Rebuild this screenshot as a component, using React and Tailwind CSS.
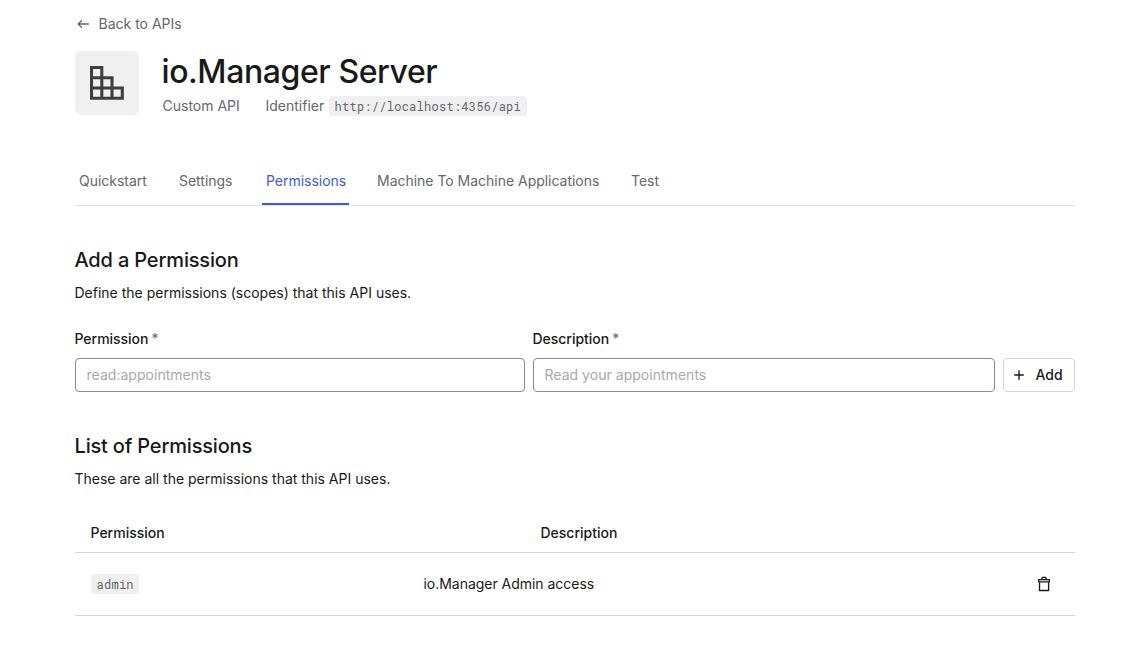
import React from "react";

const tabs = [
  { label: "Quickstart", width: "w-[76px]" },
  { label: "Settings", width: "w-[63px]" },
  { label: "Permissions", width: "w-[87px]", active: true },
  { label: "Machine To Machine Applications", width: "w-[230px]" },
  { label: "Test", width: "w-[36px]" },
];

function Code({ children }) {
  return (
    <code className="inline-flex h-5 items-center rounded bg-[#f0f0f0] pl-[6px] pr-[5.5px] font-['Roboto_Mono','Liberation_Mono',monospace] text-[12px] leading-4 tracking-[0.26px] text-[#65676e]">
      {children}
    </code>
  );
}

function BlocksIcon() {
  return (
    <svg width="34" height="34" viewBox="0 0 34 34" fill="none" stroke="#3f3f3f" strokeWidth="3.1">
      <path d="M1.5 1.5H11.8V32.3H1.5ZM1.5 11.8H22V32.3M1.5 22H32.3V32.3H1.5" />
    </svg>
  );
}

function Field({ label, placeholder, className }) {
  return (
    <label className={`flex flex-col ${className}`}>
      <span className="h-5 text-[14px] font-medium leading-5 tracking-[-0.02px]">
        {label}
        <span className="ml-[3px] font-normal text-[#65676e]">*</span>
      </span>
      <input
        placeholder={placeholder}
        className="mt-[9px] h-[34px] w-full rounded border border-[#8c8c8d] px-[10.5px] pb-[2px] text-[14px] tracking-[0.03px] outline-none placeholder:text-[#aaaaaa]"
      />
    </label>
  );
}

export default function App() {
  return (
    <main className="h-[661px] w-full overflow-hidden bg-white pl-[75px] font-['Inter',sans-serif] text-[14px] leading-5 text-[#191919] [text-indent:-0.5px]">
      <div className="flex w-[1000px] flex-col">
        <a className="mt-[14px] flex h-5 items-center text-[#65676e]">
          <svg className="ml-[2px] mr-[9px]" width="13" height="12" viewBox="0 0 13 12" fill="none" stroke="currentColor" strokeWidth="1.3" strokeLinecap="round" strokeLinejoin="round">
            <path d="M11.3 6H1.2M4.4 2.8L1.2 6l3.2 3.2" />
          </svg>
          <span>Back to APIs</span>
        </a>

        <header className="mt-[17px] flex h-16">
          <div className="flex h-16 w-16 items-center justify-center rounded-md bg-[#f0f0f0]">
            <BlocksIcon />
          </div>
          <div className="ml-[23px] flex flex-col">
            <h1 className="h-10 whitespace-nowrap text-[32px] font-medium leading-[41px] tracking-[-0.41px]">io.Manager Server</h1>
            <div className="mt-[5px] flex h-5 items-center text-[#65676e]">
              <span className="ml-px w-[103px]">Custom API</span>
              <span className="w-[63px]">Identifier</span>
              <Code>http://localhost:4356/api</Code>
            </div>
          </div>
        </header>

        <nav className="mt-[42px] flex h-[49px] gap-6 border-b border-[#e3e3e4]">
          {tabs.map((tab) => (
            <a
              key={tab.label}
              className={`flex h-12 shrink-0 whitespace-nowrap pl-[4.5px] pt-[14px] tracking-[-0.02px] ${tab.width} ${
                tab.active ? "border-b-2 border-[#3f59e4] text-[#3f59e4]" : "text-[#65676e]"
              }`}
            >
              {tab.label}
            </a>
          ))}
        </nav>

        <section className="mt-[40px]">
          <h2 className="h-7 text-[20px] font-medium leading-7 tracking-[-0.16px]">Add a Permission</h2>
          <p className="mt-[9px]">Define the permissions (scopes) that this API uses.</p>
          <form className="mt-[26px] flex items-end gap-2">
            <Field label="Permission" placeholder="read:appointments" className="w-[450px]" />
            <Field label="Description" placeholder="Read your appointments" className="w-[462px]" />
            <button type="button" className="flex h-[34px] w-[72px] items-center rounded border border-[#d5d5d6] pl-[10px] font-medium">
              <svg width="10" height="10" viewBox="0 0 10 10" stroke="currentColor" strokeWidth="1.4" strokeLinecap="round">
                <path d="M5 .7v8.6M.7 5h8.6" />
              </svg>
              <span className="ml-[11.5px]">Add</span>
            </button>
          </form>
        </section>

        <section className="mt-[40px]">
          <h2 className="h-7 text-[20px] font-medium leading-7 tracking-[-0.18px]">List of Permissions</h2>
          <p className="mt-[9px]">These are all the permissions that this API uses.</p>
          <div className="mt-[24px] flex h-10 border-b border-[#d5d5d6] pl-4 pt-[10px] font-medium">
            <span className="w-[450px]">Permission</span>
            <span>Description</span>
          </div>
          <div className="flex h-[63px] items-center border-b border-[#d5d5d6] pl-4 pr-6">
            <div className="flex w-[333px]">
              <Code>admin</Code>
            </div>
            <span className="flex-1 tracking-[-0.03px]">io.Manager Admin access</span>
            <svg width="14" height="16" viewBox="0 0 14 16" fill="none" stroke="#191919" strokeWidth="1.3" strokeLinejoin="round">
              <path d="M1.6 3.6h10.8v2.2H1.6zM2.5 5.8v8.7h9.1V5.8M4.6 3.6L5.2 1.4h3.6l.6 2.2" />
            </svg>
          </div>
        </section>
      </div>
    </main>
  );
}
